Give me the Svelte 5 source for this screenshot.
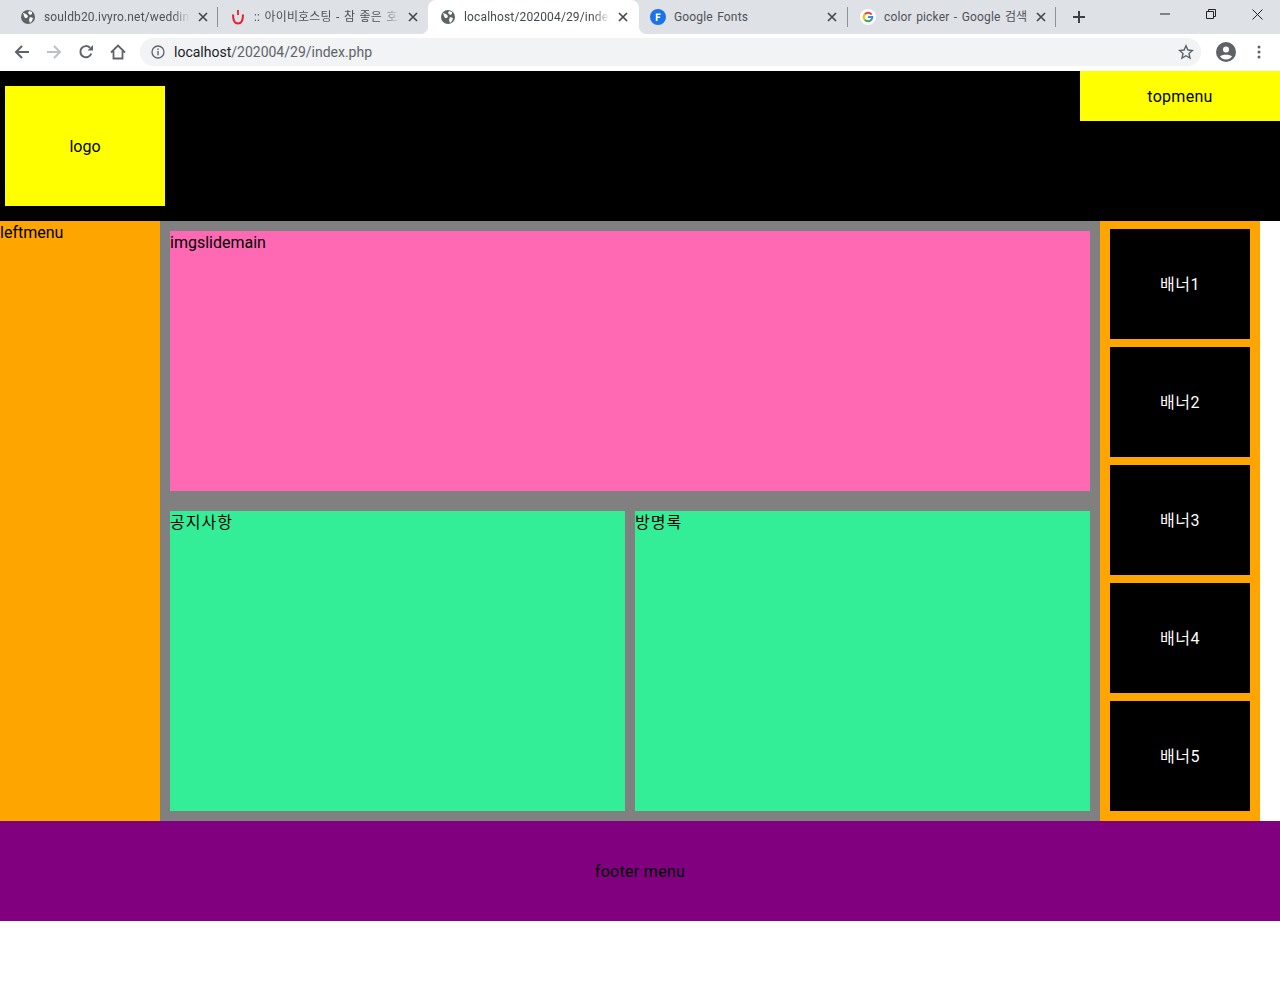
<script>
  const tabs = [
    { title: 'souldb20.ivyro.net/wedding', icon: 'globe' },
    { title: ':: 아이비호스팅 - 참 좋은 호스팅', icon: 'ivy' },
    { title: 'localhost/202004/29/index.php', icon: 'globe', active: true },
    { title: 'Google Fonts', icon: 'fonts' },
    { title: 'color picker - Google 검색', icon: 'google' }
  ];
  const banners = ['배너1', '배너2', '배너3', '배너4', '배너5'];
</script>

<div class="browser">
  <div class="tabstrip">
    {#each tabs as tab, i}
      <div class="tab" class:active={tab.active} class:sep={i === 0 || i === 3 || i === 4}>
        <svg class="favicon" viewBox="0 0 16 16" width="16" height="16">
          {#if tab.icon === 'globe'}
            <circle cx="8" cy="8" r="7" fill="#5f6368" />
            <path d="M3 4l3 1 2 2-1 2-2 0-1-2zM9 2l3 1 0 2-2 1-2-2zM10 8l3 1-1 3-2 2-1-3z" fill="#fff" />
          {:else if tab.icon === 'ivy'}
            <path d="M3 5.500c0 6 2 9 5 9s5-3 5-9" fill="none" stroke="#e5202e" stroke-width="2" />
            <path d="M8 1v5" stroke="#e5202e" stroke-width="1.800" />
          {:else if tab.icon === 'fonts'}
            <circle cx="8" cy="8" r="8" fill="#1a73e8" />
            <path d="M5.800 4.500h4.800v1.500H7.500v1.500h2.700V9H7.500v3H5.800z" fill="#fff" />
          {:else}
            <circle cx="8" cy="8" r="8" fill="#fff" />
            <path d="M12.500 5.200A5.300 5.300 0 0 0 4.100 4.500L5.500 6A3.400 3.400 0 0 1 10.900 6z" fill="#ea4335" />
            <path d="M4.100 4.500a5.300 5.300 0 0 0 0 7L5.500 10a3.400 3.400 0 0 1 0-4z" fill="#fbbc05" />
            <path d="M4.100 11.500a5.300 5.300 0 0 0 8 0L10.700 10a3.400 3.400 0 0 1-5.200 0z" fill="#34a853" />
            <path d="M13.300 7H8v2h3.200a3 3 0 0 1-1 1.400l1.900 1.100A5.300 5.300 0 0 0 13.300 7z" fill="#4285f4" />
          {/if}
        </svg>
        <span class="title">{tab.title}</span>
        <svg class="close" viewBox="0 0 10 10" width="10" height="10">
          <path d="M1 1l8 8M9 1l-8 8" stroke="#45484c" stroke-width="1.700" />
        </svg>
      </div>
    {/each}
    <svg class="newtab" viewBox="0 0 12 12" width="12" height="12">
      <path d="M6 0v12M0 6h12" stroke="#3c4043" stroke-width="2" />
    </svg>
    <div class="winctl">
      <svg viewBox="0 0 10 10" width="10" height="10"><path d="M0 5h10" stroke="#222" /></svg>
      <svg viewBox="0 0 10 10" width="10" height="10">
        <path d="M.5 2.500h7v7h-7zM2.500 2.500v-2h7v7h-2" fill="none" stroke="#222" />
      </svg>
      <svg viewBox="0 0 11 11" width="11" height="11"><path d="M.5.500l10 10M10.500.500l-10 10" stroke="#222" /></svg>
    </div>
  </div>

  <div class="toolbar">
    <svg class="nav" viewBox="0 0 16 16" width="16" height="16">
      <path d="M15 8H2M8 2L2 8l6 6" fill="none" stroke="#5f6368" stroke-width="2" />
    </svg>
    <svg class="nav" viewBox="0 0 16 16" width="16" height="16">
      <path d="M1 8h13M8 2l6 6-6 6" fill="none" stroke="#bdc1c6" stroke-width="2" />
    </svg>
    <svg class="nav" viewBox="0 0 16 16" width="16" height="16">
      <path d="M13.300 9.500A5.600 5.600 0 1 1 12 3.800" fill="none" stroke="#5f6368" stroke-width="2" />
      <path d="M9.500 6.500H15V1z" fill="#5f6368" />
    </svg>
    <svg class="nav" viewBox="0 0 16 16" width="16" height="16">
      <path d="M1 8.500L8 1.500l7 7M3.500 7v7.500h9V7" fill="none" stroke="#5f6368" stroke-width="1.800" />
    </svg>
    <div class="omnibox">
      <svg viewBox="0 0 14 14" width="14" height="14">
        <circle cx="7" cy="7" r="6" fill="none" stroke="#5f6368" stroke-width="1.300" />
        <path d="M7 6v4.200M7 3.500v1.500" stroke="#5f6368" stroke-width="1.400" />
      </svg>
      <span class="url"><b>localhost</b>/202004/29/index.php</span>
      <svg class="star" viewBox="0 0 16 16" width="16" height="16">
        <path d="M8 1.800l1.900 4.200 4.500.5-3.400 3 1 4.500L8 11.700 4 14l1-4.500-3.400-3 4.500-.5z" fill="none" stroke="#5f6368" stroke-width="1.400" />
      </svg>
    </div>
    <svg class="avatar" viewBox="0 0 20 20" width="20" height="20">
      <circle cx="10" cy="10" r="10" fill="#5f6368" />
      <circle cx="10" cy="7.500" r="3" fill="#fff" />
      <path d="M4 14.500c1.500-2.500 10.500-2.500 12 0-1.500 2-3.500 3-6 3s-4.500-1-6-3z" fill="#fff" />
    </svg>
    <svg class="dots" viewBox="0 0 4 14" width="4" height="14">
      <circle cx="2" cy="2" r="1.500" fill="#5f6368" />
      <circle cx="2" cy="7" r="1.500" fill="#5f6368" />
      <circle cx="2" cy="12" r="1.500" fill="#5f6368" />
    </svg>
  </div>
</div>

<div class="page">
  <header>
    <div class="logo">logo</div>
    <div class="topmenu">topmenu</div>
  </header>

  <main>
    <div class="leftmenu">leftmenu</div>
    <div class="center">
      <div class="imgslide">imgslidemain</div>
      <div class="boards">
        <div class="board">공지사항</div>
        <div class="board">방명록</div>
      </div>
    </div>
    <div class="right">
      {#each banners as b}
        <div class="banner">{b}</div>
      {/each}
    </div>
  </main>

  <footer>footer menu</footer>
</div>

<style>
  :global(body) {
    margin: 0;
    background: #fff;
  }

  .browser {
    height: 71px;
    background: #fff;
    font-family: Roboto, "Noto Sans CJK KR", sans-serif;
  }

  .tabstrip {
    height: 34px;
    background: #dee1e6;
    display: flex;
    padding-left: 8px;
    box-sizing: border-box;
  }

  .tab {
    width: 210px;
    height: 34px;
    box-sizing: border-box;
    display: flex;
    align-items: center;
    padding: 0 10px 0 12px;
    gap: 8px;
    font-size: 12px;
    line-height: 16px;
    color: #4f5257;
    position: relative;
  }

  .tab:nth-child(3) {
    width: 211px;
    padding-right: 11px;
  }

  .tab:nth-child(4) {
    width: 209px;
    padding: 0 11px;
  }

  .tab:nth-child(5) {
    width: 208px;
  }

  .tab.sep::after {
    content: "";
    position: absolute;
    right: 0;
    top: 7px;
    height: 20px;
    width: 1px;
    background: #8e9196;
  }

  .tab.active {
    background: #fff;
    border-radius: 8px 8px 0 0;
    color: #45484c;
  }

  .tab.active::before,
  .tab.active::after {
    content: "";
    position: absolute;
    bottom: 0;
    width: 8px;
    height: 8px;
  }

  .tab.active::before {
    left: -8px;
    background: radial-gradient(circle at 0 0, #dee1e6 8px, #fff 8.5px);
  }

  .tab.active::after {
    right: -8px;
    background: radial-gradient(circle at 100% 0, #dee1e6 8px, #fff 8.5px);
  }

  .title {
    flex: 1;
    white-space: nowrap;
    overflow: hidden;
    margin-top: -1px;
    letter-spacing: .15px;
    word-spacing: 1.3px;
    -webkit-mask-image: linear-gradient(to right, #000 88%, transparent);
    mask-image: linear-gradient(to right, #000 88%, transparent);
  }

  .tab:nth-child(4) .title,
  .tab:nth-child(5) .title {
    -webkit-mask-image: none;
    mask-image: none;
  }

  .favicon, .close {
    flex: none;
  }

  .newtab {
    margin: 11px 0 0 17px;
  }

  .winctl {
    margin-left: auto;
    display: flex;
    gap: 36px;
    padding: 9px 17px 0 0;
    align-items: flex-start;
  }

  .toolbar {
    height: 36px;
    display: flex;
    align-items: center;
    padding: 0 19px 1px 14px;
  }

  .nav {
    margin-right: 16px;
  }

  .omnibox {
    flex: none;
    width: 1061px;
    margin-left: -2px;
    height: 28px;
    border-radius: 14px;
    background: #f1f3f4;
    display: flex;
    align-items: center;
    padding: 0 7px 0 11px;
    box-sizing: border-box;
    gap: 9px;
  }

  .url {
    flex: 1;
    font-size: 14px;
    color: #5f6368;
  }

  .url b {
    font-weight: 400;
    color: #202124;
  }

  .avatar {
    margin-left: 15px;
  }

  .dots {
    margin-left: 21px;
  }

  .page {
    font-family: Roboto, "Noto Sans CJK KR", sans-serif;
    font-size: 16px;
    line-height: 21px;
    color: #000;
  }

  header {
    height: 150px;
    background: #000;
    display: flex;
    justify-content: space-between;
    align-items: flex-start;
  }

  .logo {
    width: 160px;
    height: 120px;
    margin: 15px 0 0 5px;
    background: #ff0;
    display: flex;
    align-items: center;
    justify-content: center;
  }

  .topmenu {
    width: 200px;
    height: 50px;
    background: #ff0;
    display: flex;
    align-items: center;
    justify-content: center;
    letter-spacing: .3px;
  }

  main {
    display: flex;
    height: 600px;
  }

  .leftmenu {
    width: 160px;
    background: #ffa500;
    padding-top: 1px;
  }

  .center {
    width: 940px;
    box-sizing: border-box;
    background: #808080;
    padding: 10px;
    display: flex;
    flex-direction: column;
    gap: 20px;
  }

  .imgslide {
    height: 260px;
    box-sizing: border-box;
    padding-top: 1px;
    background: #ff69b4;
  }

  .boards {
    display: flex;
    gap: 10px;
    height: 300px;
  }

  .board {
    flex: 1;
    background: #33ee96;
    letter-spacing: 1px;
    padding-top: 1px;
  }

  .right {
    width: 160px;
    box-sizing: border-box;
    background: #ffa500;
    padding: 8px 10px 10px;
    display: flex;
    flex-direction: column;
    gap: 8px;
  }

  .banner {
    height: 110px;
    background: #000;
    color: #fff;
    display: flex;
    align-items: center;
    justify-content: center;
    letter-spacing: .5px;
  }

  footer {
    height: 100px;
    background: #800080;
    display: flex;
    align-items: center;
    justify-content: center;
    letter-spacing: .3px;
  }
</style>
